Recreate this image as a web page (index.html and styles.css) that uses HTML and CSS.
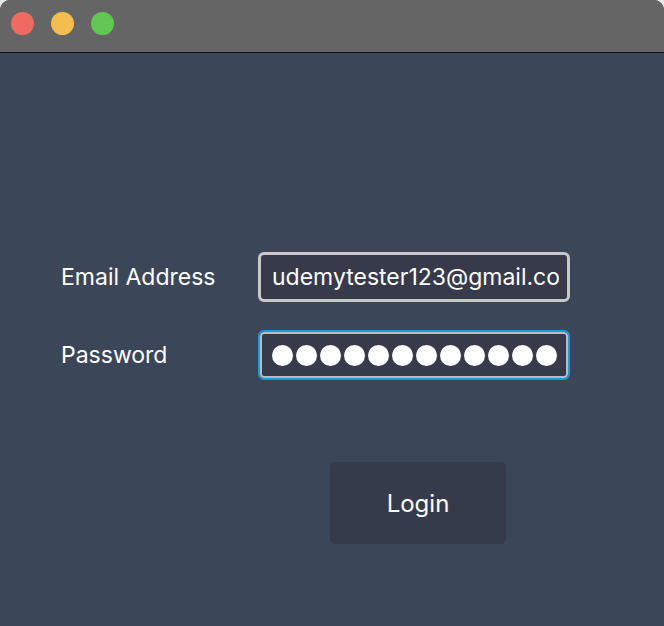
FILE: index.html
```html
<!DOCTYPE html>
<html lang="en">
<head>
<meta charset="utf-8">
<title>Login</title>
<link rel="stylesheet" href="styles.css">
</head>
<body>
<div class="window">
  <div class="titlebar">
    <span class="light red"></span>
    <span class="light yellow"></span>
    <span class="light green"></span>
  </div>
  <div class="content">
    <div class="form">
      <label class="label">Email Address</label>
      <div class="field">
        <div class="field-inner"><span class="value">udemytester123@gmail.com</span></div>
      </div>
      <label class="label">Password</label>
      <div class="field focused">
        <div class="field-inner">
          <div class="dots">
            <span class="dot"></span><span class="dot"></span><span class="dot"></span><span class="dot"></span><span class="dot"></span><span class="dot"></span><span class="dot"></span><span class="dot"></span><span class="dot"></span><span class="dot"></span><span class="dot"></span><span class="dot"></span><span class="dot"></span>
          </div>
        </div>
      </div>
      <div class="actions">
        <button class="login">Login</button>
      </div>
    </div>
  </div>
</div>
</body>
</html>
```
FILE: styles.css
```css
html, body {
  margin: 0;
  padding: 0;
  background: #e8e8e8;
}
body {
  font-family: "Inter", "Noto Sans", sans-serif;
  color: #ffffff;
}
.window {
  width: 664px;
  height: 626px;
  display: flex;
  flex-direction: column;
  border-radius: 10px 10px 0 0;
  overflow: hidden;
  background: #3c4659;
}
.titlebar {
  flex: none;
  height: 53px;
  box-sizing: border-box;
  background: #656565;
  border-bottom: 1px solid #0d0d0d;
  display: flex;
  align-items: flex-start;
  padding: 12px 0 0 11px;
  gap: 17px;
}
.light {
  width: 23px;
  height: 23px;
  border-radius: 50%;
  display: block;
}
.red { background: #ef6b61; }
.yellow { background: #f5bd4f; }
.green { background: #62c655; }
.content {
  flex: 1;
  padding: 199px 0 0 61px;
}
.form {
  display: grid;
  grid-template-columns: 197px 312px;
  row-gap: 28px;
  align-items: center;
}
.label {
  font-size: 23px;
  line-height: 26px;
}
.field {
  height: 50px;
  box-sizing: border-box;
  border: 3px solid #c9c9c9;
  border-radius: 6px;
  background: #363a4a;
  overflow: hidden;
}
.field.focused {
  border: 2px solid #1b9bd3;
}
.field-inner {
  height: 100%;
  box-sizing: border-box;
  display: flex;
  align-items: center;
  padding: 0 8px 0 11px;
  overflow: hidden;
}
.field.focused .field-inner {
  border: 2px solid #b9bcc2;
  border-radius: 4px;
  padding-left: 10px;
}
.value {
  font-size: 23px;
  white-space: nowrap;
  overflow: hidden;
}
.dots {
  display: flex;
  gap: 3px;
  overflow: hidden;
  width: 100%;
}
.dot {
  flex: none;
  width: 21px;
  height: 21px;
  border-radius: 50%;
  background: #ffffff;
}
.actions {
  grid-column: 2;
  padding: 54px 0 0 72px;
}
.login {
  width: 176px;
  height: 82px;
  border: none;
  border-radius: 5px;
  background: #363b4c;
  color: #ffffff;
  font-family: "Inter", "Noto Sans", sans-serif;
  font-size: 24px;
  padding: 0;
}
```
